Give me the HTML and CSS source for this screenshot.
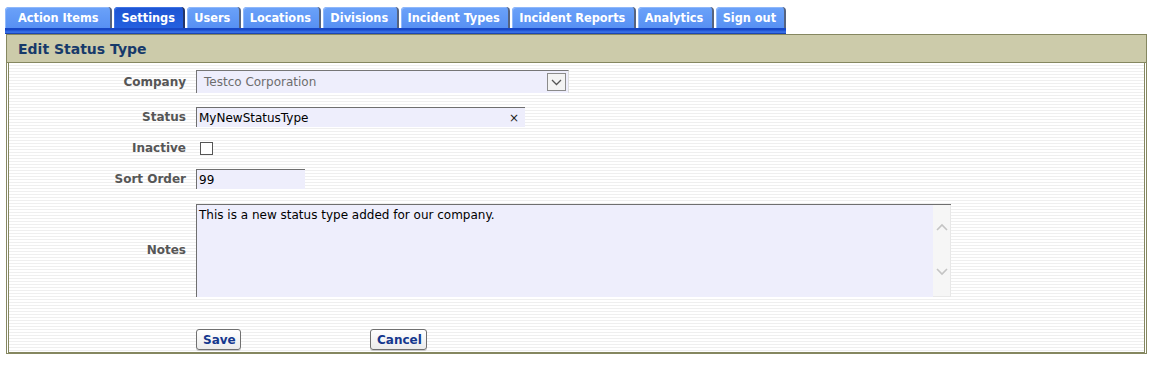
FILE: index.html
```html
<!DOCTYPE html>
<html>
<head>
<meta charset="utf-8">
<title>Edit Status Type</title>
<link rel="stylesheet" href="styles.css">
</head>
<body>
<div class="nav">
  <div class="tabs">
    <a class="tab">Action Items</a>
    <a class="tab active">Settings</a>
    <a class="tab">Users</a>
    <a class="tab">Locations</a>
    <a class="tab">Divisions</a>
    <a class="tab">Incident Types</a>
    <a class="tab">Incident Reports</a>
    <a class="tab">Analytics</a>
    <a class="tab">Sign out</a>
  </div>
  <div class="bar"></div>
</div>

<div class="panel">
  <div class="panel-head">Edit Status Type</div>
  <div class="panel-body">
    <div class="form">
      <label class="lbl">Company</label>
      <div class="field">
        <div class="select">
          <span class="select-text">Testco Corporation</span>
          <span class="select-btn">
            <svg width="11" height="7" viewBox="0 0 11 7"><path d="M1 1 L5.5 5.5 L10 1" fill="none" stroke="#555" stroke-width="1.3"/></svg>
          </span>
        </div>
      </div>

      <label class="lbl">Status</label>
      <div class="field">
        <div class="input status">
          <span class="val">MyNewStatusType</span>
          <span class="clear">×</span>
        </div>
      </div>

      <label class="lbl">Inactive</label>
      <div class="field">
        <input type="checkbox" class="check">
      </div>

      <label class="lbl">Sort Order</label>
      <div class="field">
        <div class="input sort"><span class="val">99</span></div>
      </div>

      <label class="lbl notes-lbl">Notes</label>
      <div class="field notes-field">
        <div class="textarea">
          <div class="ta-text">This is a new status type added for our company.</div>
          <div class="scroll">
            <svg width="12" height="8" viewBox="0 0 12 8"><path d="M1 7 L6 2 L11 7" fill="none" stroke="#c4c4c4" stroke-width="1.6"/></svg>
            <svg width="12" height="8" viewBox="0 0 12 8"><path d="M1 1 L6 6 L11 1" fill="none" stroke="#c4c4c4" stroke-width="1.6"/></svg>
          </div>
        </div>
      </div>

      <span class="lbl"></span>
      <div class="field buttons">
        <button class="btn save">Save</button>
        <button class="btn cancel">Cancel</button>
      </div>
    </div>
  </div>
</div>
</body>
</html>
```

FILE: styles.css
```css
* { box-sizing: border-box; }

body {
  margin: 0;
  background: #ffffff;
  font-family: "DejaVu Sans", Verdana, sans-serif;
  font-size: 12px;
  color: #000;
}

.nav {
  display: inline-flex;
  flex-direction: column;
  margin: 7px 0 0 5px;
}

.tabs {
  display: flex;
  gap: 2px;
}

.tab {
  display: block;
  height: 21px;
  line-height: 22px;
  padding: 0 8.4px 0 7px;
  font-family: "DejaVu Sans Condensed", "DejaVu Sans", sans-serif;
  font-stretch: condensed;
  font-size: 12.6px;
  font-weight: bold;
  color: #ffffff;
  background: linear-gradient(#6ba2f9, #5790f3);
  border-radius: 4px 4px 0 0;
  border-right: 2px solid #56637f;
  box-shadow: inset 1px 1px 0 #8fb8fb;
  white-space: nowrap;
  cursor: pointer;
}

.tab:first-child {
  padding: 0 12px 0 13px;
}

.tab.active {
  background: linear-gradient(#1e55d4, #2460df);
  box-shadow: inset 1px 1px 0 #3f74e4;
  border-right-color: #23356a;
}

.bar {
  height: 6px;
  background: linear-gradient(#1747c6 0, #1747c6 2px, #2d66e2 3px, #3a71e6 5px);
  border-bottom: 1px solid #1a45b5;
}

.panel {
  margin: 0 5px 0 6px;
  border: 1px solid #858760;
  padding: 0 1px 0 1px;
}

.panel-head {
  height: 28px;
  line-height: 28px;
  padding-left: 11px;
  margin: 0 -1px;
  background: #cccbaa;
  border-bottom: 1px solid #858760;
  color: #173a6a;
  font-size: 14px;
  font-weight: bold;
}

.panel-body {
  border: 1px solid #858760;
  border-top: none;
  padding: 7px 0 2px 0;
  background: repeating-linear-gradient(#ffffff 0, #ffffff 2px, #efefef 2px, #efefef 3px);
}

.form {
  display: grid;
  grid-template-columns: 177px 1fr;
  column-gap: 10px;
  row-gap: 14px;
  align-items: center;
}

.lbl {
  text-align: right;
  font-weight: bold;
  color: #565656;
  font-size: 12px;
}

.field {
  display: flex;
  align-items: center;
}

.select {
  width: 373px;
  height: 23px;
  display: flex;
  align-items: center;
  justify-content: space-between;
  background: #eeeefc;
  border-top: 1px solid #767676;
  border-left: 1px solid #767676;
  border-right: 1px solid #dcdcdc;
  padding: 0 2px 0 7px;
}

.select-text {
  color: #6d6d6d;
}

.select-btn {
  width: 19px;
  height: 18px;
  border: 1px solid #8b8b8b;
  background: #f3f3f3;
  display: flex;
  align-items: center;
  justify-content: center;
}

.input {
  height: 20px;
  display: flex;
  align-items: center;
  justify-content: space-between;
  background: #eeeefc;
  border-top: 1px solid #6f6f6f;
  border-left: 1px solid #6f6f6f;
  padding: 0 6px 0 2px;
}

.status { width: 329px; }
.sort { width: 109px; }

.clear {
  font-size: 12px;
  color: #222;
}

.check {
  appearance: none;
  -webkit-appearance: none;
  width: 13px;
  height: 13px;
  margin: 0 0 0 4px;
  border: 1px solid #555;
  background: #fff;
}

.notes-field { margin-top: 1px; }

.textarea {
  width: 755px;
  height: 93px;
  display: flex;
  background: #eeeefc;
  border-top: 1px solid #6f6f6f;
  border-left: 1px solid #6f6f6f;
}

.ta-text {
  flex: 1;
  padding: 3px 2px;
}

.scroll {
  width: 18px;
  background: #f6f6f6;
  border-right: 1px solid #e8e8e8;
  border-bottom: 1px solid #e8e8e8;
  display: flex;
  flex-direction: column;
  align-items: center;
  justify-content: space-between;
  padding: 18px 0 20px;
}

.buttons {
  margin-top: 18px;
  gap: 129px;
}

.btn {
  height: 21px;
  padding: 0 6px;
  font-family: "DejaVu Sans", Verdana, sans-serif;
  font-size: 12px;
  font-weight: bold;
  color: #14378e;
  background: linear-gradient(#ffffff, #ebebeb);
  border: 1px solid #707070;
  border-radius: 3px;
  box-shadow: 0 1px 0 #c8c8c8;
}

.save { width: 45px; }
.cancel { width: 57px; }
```
